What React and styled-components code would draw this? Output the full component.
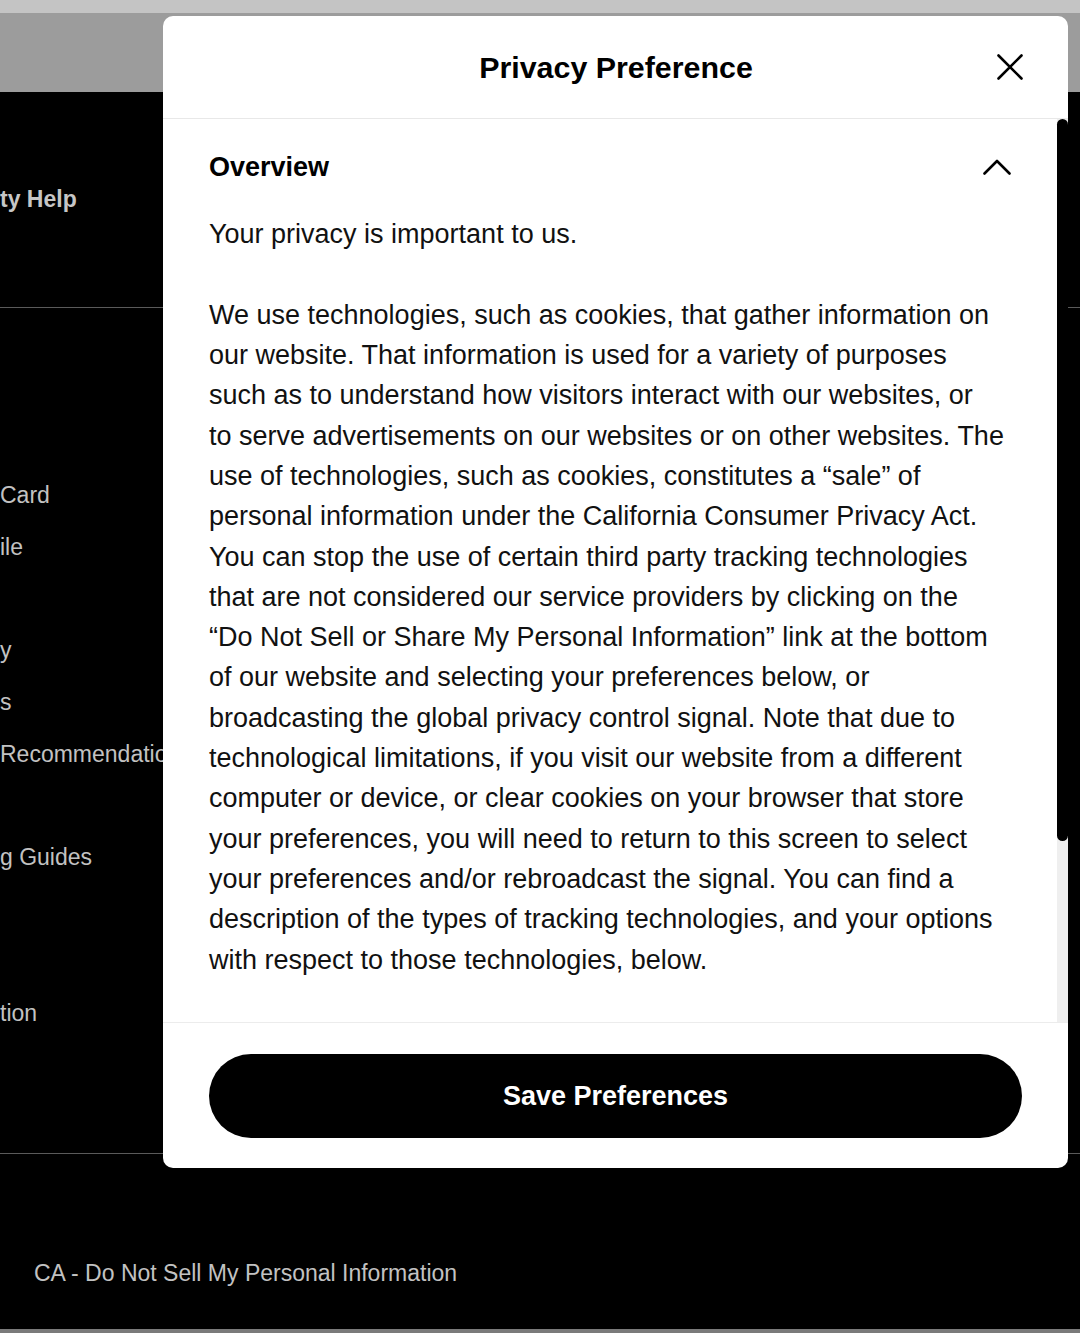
import React from "react";
import styled, { createGlobalStyle } from "styled-components";

const GlobalStyle = createGlobalStyle`
  html, body {
    margin: 0;
    padding: 0;
    background: #000;
  }
  * {
    box-sizing: border-box;
  }
`;

const Page = styled.div`
  position: relative;
  width: 1080px;
  height: 1333px;
  overflow: hidden;
  display: flex;
  flex-direction: column;
  font-family: "Liberation Sans", Arial, sans-serif;
`;

const TopStrip = styled.div`
  height: 13px;
  background: #c4c4c4;
`;

const HeaderBar = styled.div`
  height: 79px;
  background: #9c9c9c;
`;

const Footer = styled.footer`
  flex: 1;
  display: flex;
  flex-direction: column;
  background: #000;
  color: #c2c2c2;
`;

const FooterTop = styled.div`
  height: 216px;
  border-bottom: 1px solid #5a5a5a;
  display: flex;
  align-items: center;
`;

const FooterHeading = styled.h4`
  margin: 0;
  font-size: 23px;
  font-weight: 700;
  color: #c6c6c6;
`;

const LinkColumns = styled.div`
  height: 846px;
  border-bottom: 1px solid #5a5a5a;
  padding-top: 162px;
  display: flex;
  flex-direction: column;
  gap: 52px;
`;

const LinkGroup = styled.ul`
  list-style: none;
  margin: 0;
  padding: 0;
`;

const LinkItem = styled.li`
  height: 51.7px;
  line-height: 51.7px;
  font-size: 23px;
  white-space: nowrap;
  color: #c2c2c2;
`;

const LegalRow = styled.div`
  height: 175px;
  display: flex;
  align-items: center;
  padding: 64px 0 0 34px;
  font-size: 23px;
  color: #c2c2c2;
`;

const BottomStrip = styled.div`
  height: 4px;
  background: #7a7a7a;
`;

/* dialog */

const Modal = styled.div`
  position: absolute;
  left: 163px;
  top: 16px;
  width: 905px;
  height: 1152px;
  background: #fff;
  border-radius: 10px;
  overflow: hidden;
  display: flex;
  flex-direction: column;
  color: #000;
`;

const ModalHeader = styled.div`
  height: 103px;
  flex-shrink: 0;
  border-bottom: 1px solid #e8e8e8;
  display: grid;
  grid-template-columns: 1fr auto 1fr;
  align-items: center;
  padding: 0 45px 0 46px;
`;

const ModalTitle = styled.h2`
  grid-column: 2;
  margin: 0;
  font-size: 30.4px;
  font-weight: 700;
`;

const CloseButton = styled.button`
  grid-column: 3;
  justify-self: end;
  width: 26px;
  height: 26px;
  padding: 0;
  border: 0;
  background: none;
  display: flex;
  cursor: pointer;
`;

const ModalBody = styled.div`
  flex: 1;
  min-height: 0;
  display: flex;
`;

const ScrollArea = styled.div`
  flex: 1;
  overflow: hidden;
  padding: 32px 46px 0;
`;

const ScrollTrack = styled.div`
  width: 11px;
  flex-shrink: 0;
  background: #efefef;
`;

const ScrollThumb = styled.div`
  width: 100%;
  border-radius: 6px;
  background: #000;
`;

const SectionRow = styled.div`
  height: 32px;
  display: flex;
  align-items: center;
  justify-content: space-between;
`;

const SectionTitle = styled.h3`
  margin: 0;
  font-size: 27px;
  font-weight: 700;
`;

const ChevronButton = styled.button`
  width: 28px;
  height: 16px;
  padding: 0;
  border: 0;
  background: none;
  display: flex;
  cursor: pointer;
`;

const Text = styled.p`
  margin: ${(p) => (p.$first ? "31px" : "0")} 0 40.5px;
  font-size: 27px;
  line-height: 40.3px;
  color: #111;
`;

const Line = styled.span`
  display: block;
  white-space: nowrap;
`;

const ModalFooter = styled.div`
  flex-shrink: 0;
  border-top: 1px solid #ececec;
  padding: 31px 46px 30px;
`;

const SaveButton = styled.button`
  width: 100%;
  height: 84px;
  border: 0;
  border-radius: 42px;
  background: #000;
  color: #fff;
  font-family: "Liberation Sans", Arial, sans-serif;
  font-size: 27px;
  font-weight: 700;
  cursor: pointer;
`;

const overviewLines = [
  "We use technologies, such as cookies, that gather information on",
  "our website. That information is used for a variety of purposes",
  "such as to understand how visitors interact with our websites, or",
  "to serve advertisements on our websites or on other websites. The",
  "use of technologies, such as cookies, constitutes a \u201csale\u201d of",
  "personal information under the California Consumer Privacy Act.",
  "You can stop the use of certain third party tracking technologies",
  "that are not considered our service providers by clicking on the",
  "\u201cDo Not Sell or Share My Personal Information\u201d link at the bottom",
  "of our website and selecting your preferences below, or",
  "broadcasting the global privacy control signal. Note that due to",
  "technological limitations, if you visit our website from a different",
  "computer or device, or clear cookies on your browser that store",
  "your preferences, you will need to return to this screen to select",
  "your preferences and/or rebroadcast the signal. You can find a",
  "description of the types of tracking technologies, and your options",
  "with respect to those technologies, below.",
];

const linkGroups = [
  ["Card", "ile"],
  ["y", "s", "Recommendations"],
  ["g Guides", ""],
  ["tion"],
];

// visible share of the scroll content, drives the thumb length
const scrollRatio = 0.8;

function CloseIcon() {
  return (
    <svg width="26" height="26" viewBox="0 0 26 26" fill="none">
      <path d="M1.5 1.5 L24.5 24.5 M24.5 1.5 L1.5 24.5" stroke="#000" strokeWidth="2.6" strokeLinecap="round" />
    </svg>
  );
}

function ChevronUp() {
  return (
    <svg width="28" height="16" viewBox="0 0 28 16" fill="none">
      <path d="M1.5 14.5 L14 2 L26.5 14.5" stroke="#000" strokeWidth="2.6" strokeLinecap="round" strokeLinejoin="round" />
    </svg>
  );
}

export default function App() {
  return (
    <>
      <GlobalStyle />
      <Page>
        <TopStrip />
        <HeaderBar />
        <Footer>
          <FooterTop>
            <FooterHeading>ty Help</FooterHeading>
          </FooterTop>
          <LinkColumns>
            {linkGroups.map((group, i) => (
              <LinkGroup key={i}>
                {group.map((label, j) => (
                  <LinkItem key={j}>{label}</LinkItem>
                ))}
              </LinkGroup>
            ))}
          </LinkColumns>
          <LegalRow>CA - Do Not Sell My Personal Information</LegalRow>
          <BottomStrip />
        </Footer>

        <Modal role="dialog" aria-label="Privacy Preference">
          <ModalHeader>
            <ModalTitle>Privacy Preference</ModalTitle>
            <CloseButton aria-label="Close">
              <CloseIcon />
            </CloseButton>
          </ModalHeader>

          <ModalBody>
            <ScrollArea>
              <SectionRow>
                <SectionTitle>Overview</SectionTitle>
                <ChevronButton aria-label="Collapse">
                  <ChevronUp />
                </ChevronButton>
              </SectionRow>
              <Text $first>Your privacy is important to us.</Text>
              <Text>
                {overviewLines.map((line, i) => (
                  <Line key={i}>{line}</Line>
                ))}
              </Text>
            </ScrollArea>
            <ScrollTrack>
              <ScrollThumb style={{ height: `${scrollRatio * 100}%` }} />
            </ScrollTrack>
          </ModalBody>

          <ModalFooter>
            <SaveButton>Save Preferences</SaveButton>
          </ModalFooter>
        </Modal>
      </Page>
    </>
  );
}
